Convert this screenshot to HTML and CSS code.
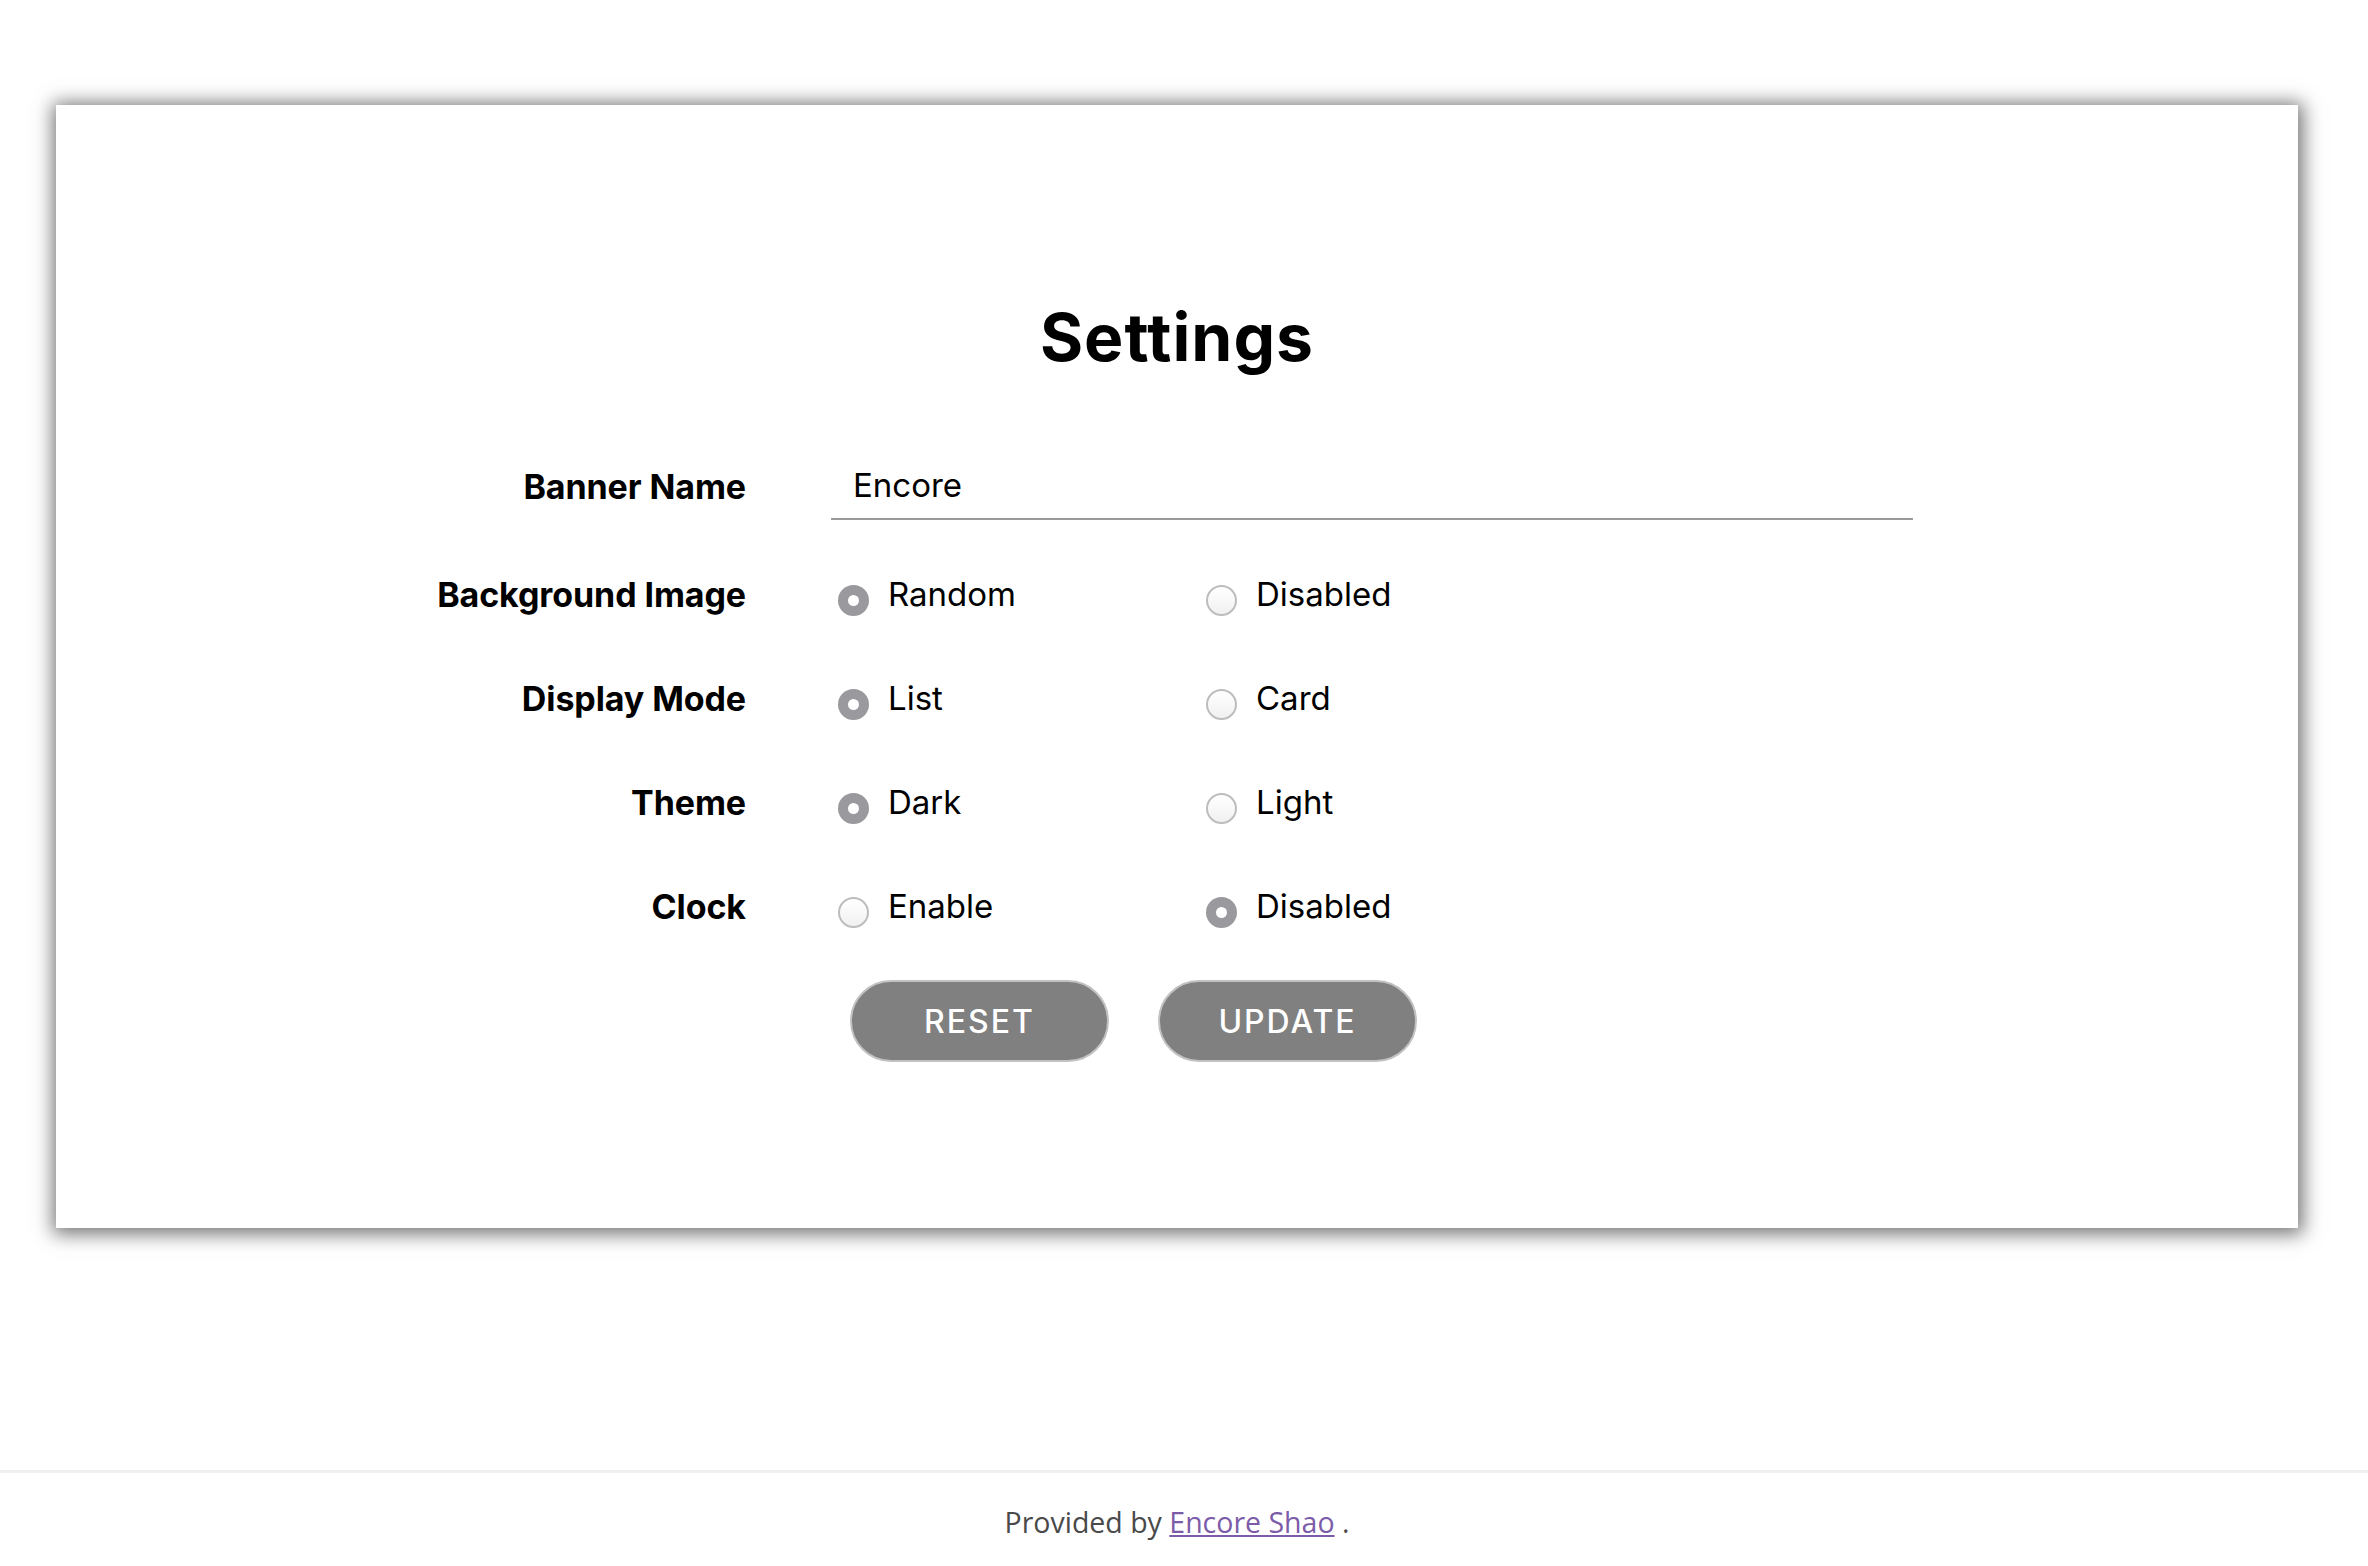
FILE: index.html
```html
<!DOCTYPE html>
<html lang="en">
<head>
<meta charset="utf-8">
<title>Settings</title>
<link rel="stylesheet" href="styles.css">
</head>
<body>
<main class="card">
  <h1 class="title">Settings</h1>
  <form class="form">
    <div class="row row-input">
      <label class="label" for="banner">Banner Name</label>
      <input class="text-input" id="banner" type="text" value="Encore">
    </div>
    <div class="row">
      <span class="label">Background Image</span>
      <div class="options">
        <label class="option"><input class="radio" type="radio" name="bg" checked><span>Random</span></label>
        <label class="option"><input class="radio" type="radio" name="bg"><span>Disabled</span></label>
      </div>
    </div>
    <div class="row">
      <span class="label">Display Mode</span>
      <div class="options">
        <label class="option"><input class="radio" type="radio" name="mode" checked><span>List</span></label>
        <label class="option"><input class="radio" type="radio" name="mode"><span>Card</span></label>
      </div>
    </div>
    <div class="row">
      <span class="label">Theme</span>
      <div class="options">
        <label class="option"><input class="radio" type="radio" name="theme" checked><span>Dark</span></label>
        <label class="option"><input class="radio" type="radio" name="theme"><span>Light</span></label>
      </div>
    </div>
    <div class="row">
      <span class="label">Clock</span>
      <div class="options">
        <label class="option"><input class="radio" type="radio" name="clock"><span>Enable</span></label>
        <label class="option"><input class="radio" type="radio" name="clock" checked><span>Disabled</span></label>
      </div>
    </div>
    <div class="actions">
      <button class="btn" type="button">RESET</button>
      <button class="btn" type="button">UPDATE</button>
    </div>
  </form>
</main>
<footer class="footer">
  Provided by <a class="footer-link" href="#">Encore Shao</a> .
</footer>
</body>
</html>
```
FILE: styles.css
```css
* { box-sizing: border-box; }

html, body {
  margin: 0;
  padding: 0;
  background: #fff;
}

body {
  font-family: Inter, "Liberation Sans", sans-serif;
  color: #000;
}

.card {
  margin: 105px 70px 0 56px;
  height: 1123px;
  background: #fff;
  box-shadow: 1px 2px 18px 4px rgba(0, 0, 0, 0.55);
  padding-top: 196px;
}

.title {
  margin: 0 0 79px;
  font-size: 66px;
  line-height: 72px;
  font-weight: 700;
  text-align: center;
  letter-spacing: 1px;
}

.form {
  width: 1497px;
  margin: 0 0 0 360px;
  display: flex;
  flex-direction: column;
}

.row {
  display: grid;
  grid-template-columns: 330px 1fr;
  column-gap: 85px;
  align-items: center;
  height: 104px;
}

.row-input {
  height: 68px;
  margin-bottom: 22px;
}

.label {
  text-align: right;
  font-size: 34px;
  font-weight: 700;
  letter-spacing: -0.1px;
  white-space: nowrap;
}

.text-input {
  height: 68px;
  width: 100%;
  border: none;
  border-bottom: 2px solid #9a9a9a;
  padding: 0 0 0 22px;
  font-family: Inter, "Liberation Sans", sans-serif;
  font-size: 33px;
  color: #000;
  outline: none;
  background: transparent;
}

.options {
  display: flex;
  padding-left: 7px;
}

.option {
  width: 368px;
  display: flex;
  align-items: center;
  font-size: 33px;
  font-weight: 400;
  white-space: nowrap;
}

.radio {
  appearance: none;
  -webkit-appearance: none;
  margin: 12px 19px 0 0;
  width: 31px;
  height: 31px;
  border-radius: 50%;
  border: 2px solid #bdbdbd;
  background: linear-gradient(#ffffff, #f1f1f1);
  position: relative;
  flex: none;
}

.radio:checked {
  border: none;
  background: #9a9a9e;
}

.radio:checked::after {
  content: "";
  position: absolute;
  left: 10px;
  top: 10px;
  width: 11px;
  height: 11px;
  border-radius: 50%;
  background: #fff;
}

.actions {
  display: flex;
  gap: 49px;
  margin-top: 22px;
  padding-left: 434px;
}

.btn {
  width: 259px;
  height: 82px;
  border-radius: 41px;
  border: 2px solid #c2c2c2;
  background: #808080;
  color: #fff;
  font-family: Inter, "Liberation Sans", sans-serif;
  font-size: 32px;
  font-weight: 500;
  letter-spacing: 2px;
  cursor: pointer;
}

.footer {
  margin-top: 242px;
  border-top: 3px solid #f0f0f0;
  padding: 29px 14px 0 0;
  line-height: 40px;
  text-align: center;
  font-family: "Open Sans", "Liberation Sans", sans-serif;
  font-size: 28.5px;
  color: #4a4a4a;
}

.footer-link {
  color: #7c5ca8;
  text-decoration: underline;
}
```
